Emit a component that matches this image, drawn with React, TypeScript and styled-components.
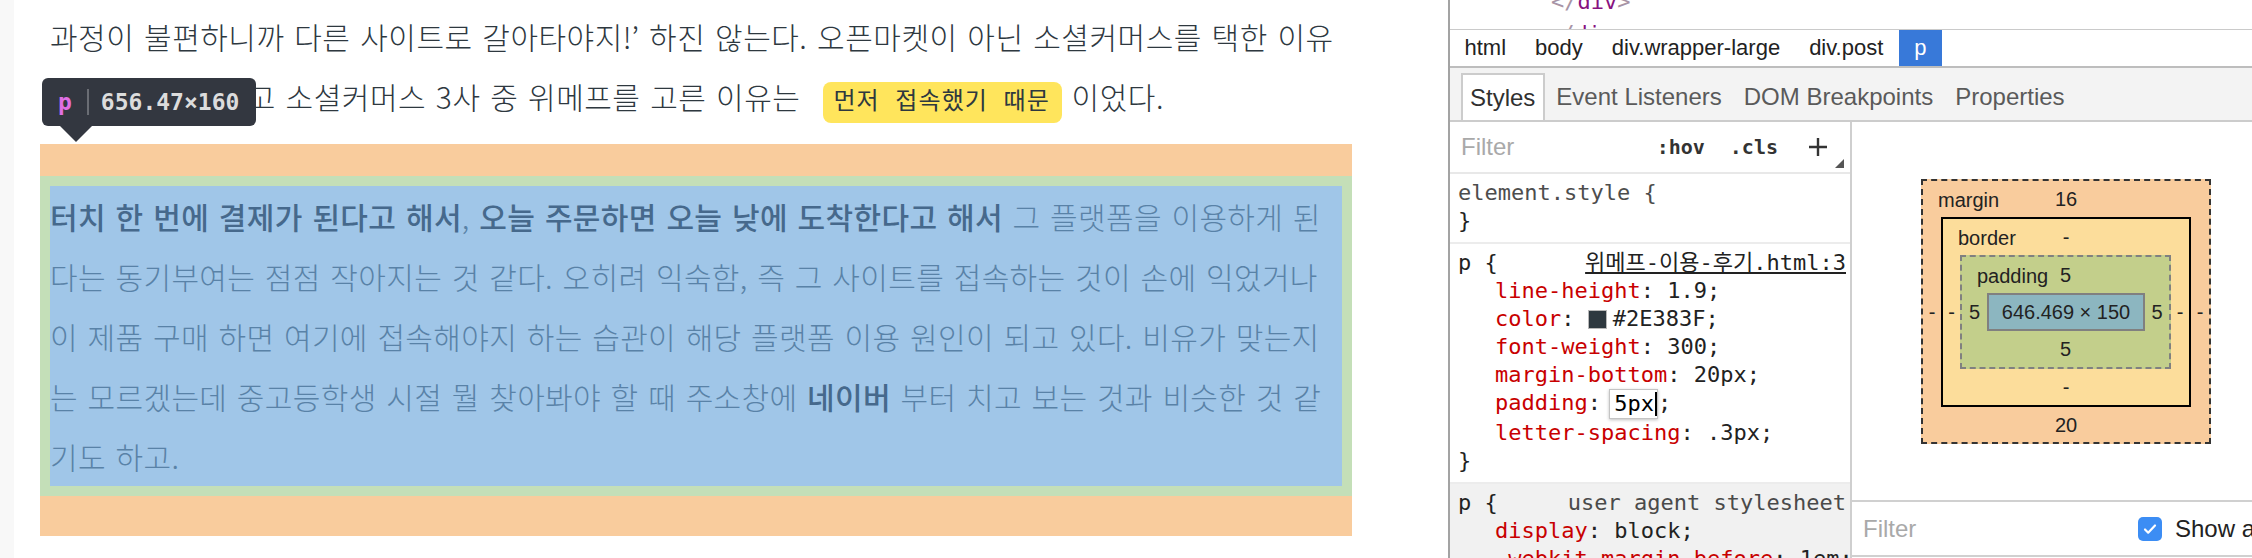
import React from "react";
import styled, { createGlobalStyle, css } from "styled-components";

const GlobalStyle = createGlobalStyle`
  *, *::before, *::after { box-sizing: border-box; }
  html, body { margin: 0; padding: 0; background: #ffffff; }
  body { overflow: hidden; }
`;

const Screen = styled.div`
  display: flex;
  width: 2252px;
  height: 558px;
  overflow: hidden;
  background: #ffffff;
`;

/* ---------------- page side ---------------- */

const Page = styled.main`
  position: relative;
  flex: 0 0 1448px;
  display: flex;
  overflow: hidden;
`;

const Gutter = styled.div`
  flex: 0 0 14px;
  background: #f8f8f8;
`;

const Post = styled.article`
  flex: 0 0 1312px;
  margin-left: 26px;
  display: flex;
  flex-direction: column;
  font-family: "Noto Sans CJK KR", "Noto Sans", sans-serif;
  font-weight: 300;
  font-size: 30px;
  line-height: 60px;
  letter-spacing: 0.5px;
  word-spacing: 2.6px;
  color: #2e383f;
`;

const LeadParagraph = styled.p`
  margin: -4px 0 8px;
  padding: 10px;
`;

const Line = styled.span`
  display: block;
  white-space: nowrap;
`;

const Code = styled.code`
  display: inline-block;
  margin: 0 0 0 23px;
  padding: 0 12px 0 10px;
  border-radius: 8px;
  background: #ffe55c;
  font-family: "Liberation Mono", "Noto Sans CJK KR", monospace;
  font-size: 24px;
  font-weight: 400;
  line-height: 41px;
  letter-spacing: 1.1px;
  word-spacing: 0;
  color: #2e383f;
`;

const MarginBox = styled.div`
  padding: 32px 0 40px;
  background: #f9cc9d;
`;

const PaddingBox = styled.div`
  padding: 10px;
  background: #c4dfb8;
`;

const ContentBox = styled.p`
  margin: 0;
  background: #a0c6e8;
  color: #5982a7;
  letter-spacing: 0.35px;
`;

const Strong = styled.strong`
  font-weight: 500;
  color: #46698c;
`;

const Tooltip = styled.div`
  position: absolute;
  left: 42px;
  top: 78px;
  height: 48px;
  display: flex;
  align-items: center;
  padding: 0 17px 0 16px;
  border-radius: 6px;
  background: #333740;
  font-family: "DejaVu Sans Mono", monospace;
  font-weight: 700;
  font-size: 23px;
  color: #dcdcdc;
  &::after {
    content: "";
    position: absolute;
    left: 18px;
    top: 100%;
    border-left: 16px solid transparent;
    border-right: 16px solid transparent;
    border-top: 16px solid #333740;
  }
`;

const TipTag = styled.span`
  color: #e06fe4;
`;

const TipDivider = styled.span`
  width: 2px;
  height: 26px;
  margin: 0 12px 0 15px;
  background: #6a6d74;
`;

/* ---------------- devtools side ---------------- */

const DevTools = styled.aside`
  flex: 1 1 auto;
  min-width: 0;
  display: flex;
  flex-direction: column;
  border-left: 2px solid #a3a3a3;
  font-family: "Liberation Sans", Arial, sans-serif;
  color: #222222;
`;

const Tree = styled.div`
  flex: 0 0 29px;
  overflow: hidden;
  font-family: "DejaVu Sans Mono", monospace;
  font-size: 22px;
  line-height: 32px;
  white-space: nowrap;
`;

const TreeRow = styled.div<{ $indent: number }>`
  padding-left: ${(p) => p.$indent}px;
  &:first-child {
    margin-top: -14px;
  }
`;

const Bracket = styled.span`
  color: #a894a6;
`;

const TagText = styled.span`
  color: #881280;
`;

const Crumbs = styled.nav`
  flex: 0 0 39px;
  display: flex;
  border-top: 1px solid #cacaca;
  border-bottom: 2px solid #bdbdbd;
  font-size: 22px;
`;

const Crumb = styled.span<{ $selected?: boolean }>`
  display: flex;
  align-items: center;
  padding: 0 14.5px;
  color: #222;
  ${(p) =>
    p.$selected &&
    css`
      margin-left: 1.5px;
      padding: 0 15px;
      background: #3879d9;
      color: #ffffff;
    `}
`;

const TabBar = styled.div`
  flex: 0 0 54px;
  display: flex;
  padding: 5px 0 0 11px;
  background: #f3f3f3;
  border-bottom: 2px solid #cccccc;
  font-size: 24px;
`;

const Tab = styled.span<{ $active?: boolean }>`
  display: flex;
  align-items: center;
  padding: 0 11px;
  color: #5a5a5a;
  ${(p) =>
    p.$active &&
    css`
      padding: 0 8px 0 7px;
      background: #ffffff;
      border: 2px solid #cccccc;
      border-bottom: none;
      color: #303030;
    `}
`;

const Panes = styled.div`
  flex: 1 1 0;
  min-height: 0;
  display: flex;
  overflow: hidden;
`;

const StylesPane = styled.section`
  flex: 0 0 402px;
  display: flex;
  flex-direction: column;
  border-right: 2px solid #cfcfcf;
  overflow: hidden;
`;

const FilterBar = styled.div`
  flex: 0 0 52px;
  display: flex;
  align-items: center;
  padding-left: 11px;
  border-bottom: 2px solid #e8e8e8;
`;

const FilterText = styled.span`
  flex: 1 1 auto;
  font-size: 24px;
  color: #a9a9a9;
`;

const Toggle = styled.span<{ $gap: number }>`
  margin-right: ${(p) => p.$gap}px;
  font-family: "DejaVu Sans Mono", monospace;
  font-weight: 700;
  font-size: 20px;
  color: #333333;
`;

const Corner = styled.svg`
  align-self: flex-end;
  margin: 0 6px 4px 7px;
`;

const Rule = styled.div<{ $ua?: boolean }>`
  flex: 0 0 auto;
  padding: 5px 4px 7px 8px;
  border-bottom: 2px solid #ececec;
  background: ${(p) => (p.$ua ? "#f1f1f1" : "#ffffff")};
  font-family: "DejaVu Sans Mono", "Noto Sans CJK KR", monospace;
  font-size: 22px;
  line-height: 28px;
  white-space: nowrap;
`;

const RuleHead = styled.div`
  display: flex;
  justify-content: space-between;
`;

const Selector = styled.span<{ $muted?: boolean }>`
  color: ${(p) => (p.$muted ? "#4d4d4d" : "#222222")};
`;

const Source = styled.span<{ $link?: boolean }>`
  color: ${(p) => (p.$link ? "#222222" : "#4a4a4a")};
  text-decoration: ${(p) => (p.$link ? "underline" : "none")};
`;

const Decl = styled.div`
  padding-left: 37px;
  color: #222222;
`;

const Prop = styled.span`
  color: #c80000;
`;

const Swatch = styled.span<{ $color: string }>`
  display: inline-block;
  width: 19px;
  height: 19px;
  margin-right: 6px;
  vertical-align: -3px;
  border: 1px solid #b8b8b8;
  background: ${(p) => p.$color};
`;

const Editor = styled.span`
  display: inline-block;
  height: 30px;
  margin-left: -5px;
  padding: 0 0 0 4px;
  line-height: 28px;
  border: 1px solid #c4c4c4;
  background: #ffffff;
  box-shadow: 0 1px 3px rgba(0, 0, 0, 0.25);
  vertical-align: middle;
  color: #000000;
`;

const Caret = styled.span`
  display: inline-block;
  width: 2px;
  height: 24px;
  margin-left: 1px;
  vertical-align: -5px;
  background: #000000;
`;

const ComputedPane = styled.section`
  flex: 1 1 auto;
  min-width: 0;
  display: flex;
  flex-direction: column;
  overflow: hidden;
`;

const BoxModelArea = styled.div`
  flex: 0 0 378px;
  padding: 57px 0 0 69px;
  font-size: 20px;
  color: #222222;
`;

type Layer = "margin" | "border" | "padding";

const layerStyles: Record<Layer, ReturnType<typeof css>> = {
  margin: css`
    grid-template-columns: 18px auto 18px;
    grid-template-rows: 36px auto 35px;
    background: #f9cc9d;
    border: 2px dashed #333333;
  `,
  border: css`
    grid-template-columns: 17px auto 18px;
    grid-template-rows: 36px auto 36px;
    background: #fcdd9b;
    border: 2px solid #000000;
  `,
  padding: css`
    grid-template-columns: 25px auto 24px;
    grid-template-rows: 36px auto 36px;
    background: #c3cf8b;
    border: 2px dashed #808080;
  `,
};

const BoxLayer = styled.div<{ $layer: Layer }>`
  position: relative;
  display: inline-grid;
  align-items: center;
  justify-items: center;
  line-height: 24px;
  ${(p) => layerStyles[p.$layer]}
`;

const LayerLabel = styled.span`
  position: absolute;
  left: 15px;
  top: 7px;
`;

const Edge = styled.span<{ $pos: "top" | "bottom" | "left" | "right" }>`
  ${(p) =>
    p.$pos === "top"
      ? css`grid-column: 1 / -1; grid-row: 1;`
      : p.$pos === "bottom"
      ? css`grid-column: 1 / -1; grid-row: 3;`
      : p.$pos === "left"
      ? css`grid-column: 1; grid-row: 2;`
      : css`grid-column: 3; grid-row: 2;`}
`;

const Inner = styled.div`
  grid-column: 2;
  grid-row: 2;
  display: flex;
`;

const ContentSize = styled.div`
  display: flex;
  align-items: center;
  justify-content: center;
  width: 158px;
  height: 38px;
  background: #8cb6c0;
  border: 2px solid #808080;
`;

const ComputedFilter = styled.div`
  flex: 0 0 57px;
  display: flex;
  align-items: center;
  padding-left: 11px;
  border-top: 2px solid #d0d0d0;
  border-bottom: 2px solid #d0d0d0;
  font-size: 24px;
  white-space: nowrap;
`;

const ComputedFilterText = styled.span`
  flex: 0 0 275px;
  color: #a9a9a9;
`;

const Check = styled.span`
  display: flex;
  align-items: center;
  justify-content: center;
  flex: 0 0 24px;
  height: 24px;
  margin-right: 13px;
  border-radius: 5px;
  background: #3c8df4;
`;

function BoxModel() {
  return (
    <BoxLayer $layer="margin">
      <LayerLabel>margin</LayerLabel>
      <Edge $pos="top">16</Edge>
      <Edge $pos="left">-</Edge>
      <Inner>
        <BoxLayer $layer="border">
          <LayerLabel>border</LayerLabel>
          <Edge $pos="top">-</Edge>
          <Edge $pos="left">-</Edge>
          <Inner>
            <BoxLayer $layer="padding">
              <LayerLabel>padding</LayerLabel>
              <Edge $pos="top">5</Edge>
              <Edge $pos="left">5</Edge>
              <Inner>
                <ContentSize>646.469 × 150</ContentSize>
              </Inner>
              <Edge $pos="right">5</Edge>
              <Edge $pos="bottom">5</Edge>
            </BoxLayer>
          </Inner>
          <Edge $pos="right">-</Edge>
          <Edge $pos="bottom">-</Edge>
        </BoxLayer>
      </Inner>
      <Edge $pos="right">-</Edge>
      <Edge $pos="bottom">20</Edge>
    </BoxLayer>
  );
}

export default function App() {
  return (
    <>
      <GlobalStyle />
      <Screen>
        <Page>
          <Gutter />
          <Post>
            <LeadParagraph>
              <Line>
                과정이 불편하니까 다른 사이트로 갈아타야지!’ 하진 않는다. 오픈마켓이 아닌 소셜커머스를 택한 이유
              </Line>
              <Line>
                는 앞 글에 적었고 소셜커머스 3사 중 위메프를 고른 이유는
                <Code>먼저 접속했기 때문</Code> 이었다.
              </Line>
            </LeadParagraph>
            <MarginBox>
              <PaddingBox>
                <ContentBox>
                  <Line>
                    <Strong>터치 한 번에 결제가 된다고 해서</Strong>, <Strong>오늘 주문하면 오늘 낮에 도착한다고 해서</Strong> 그 플랫폼을 이용하게 된
                  </Line>
                  <Line>다는 동기부여는 점점 작아지는 것 같다. 오히려 익숙함, 즉 그 사이트를 접속하는 것이 손에 익었거나</Line>
                  <Line>이 제품 구매 하면 여기에 접속해야지 하는 습관이 해당 플랫폼 이용 원인이 되고 있다. 비유가 맞는지</Line>
                  <Line>
                    는 모르겠는데 중고등학생 시절 뭘 찾아봐야 할 때 주소창에 <Strong>네이버</Strong> 부터 치고 보는 것과 비슷한 것 같
                  </Line>
                  <Line>기도 하고.</Line>
                </ContentBox>
              </PaddingBox>
            </MarginBox>
          </Post>
          <Tooltip>
            <TipTag>p</TipTag>
            <TipDivider />
            <span>656.47×160</span>
          </Tooltip>
        </Page>

        <DevTools>
          <Tree>
            <TreeRow $indent={101}>
              <Bracket>&lt;/</Bracket>
              <TagText>div</TagText>
              <Bracket>&gt;</Bracket>
            </TreeRow>
            <TreeRow $indent={98}>
              <Bracket>&lt;/</Bracket>
              <TagText>div</TagText>
              <Bracket>&gt;</Bracket>
            </TreeRow>
          </Tree>
          <Crumbs>
            <Crumb>html</Crumb>
            <Crumb>body</Crumb>
            <Crumb>div.wrapper-large</Crumb>
            <Crumb>div.post</Crumb>
            <Crumb $selected>p</Crumb>
          </Crumbs>
          <TabBar>
            <Tab $active>Styles</Tab>
            <Tab>Event Listeners</Tab>
            <Tab>DOM Breakpoints</Tab>
            <Tab>Properties</Tab>
          </TabBar>
          <Panes>
            <StylesPane>
              <FilterBar>
                <FilterText>Filter</FilterText>
                <Toggle $gap={25}>:hov</Toggle>
                <Toggle $gap={30}>.cls</Toggle>
                <svg width="20" height="20" viewBox="0 0 20 20">
                  <path d="M10 1v18M1 10h18" stroke="#333" strokeWidth="2.4" fill="none" />
                </svg>
                <Corner width="9" height="9" viewBox="0 0 9 9">
                  <path d="M9 0v9H0z" fill="#555" />
                </Corner>
              </FilterBar>
              <Rule>
                <RuleHead>
                  <Selector $muted>element.style {"{"}</Selector>
                </RuleHead>
                <div>{"}"}</div>
              </Rule>
              <Rule>
                <RuleHead>
                  <Selector>p {"{"}</Selector>
                  <Source $link>위메프-이용-후기.html:3</Source>
                </RuleHead>
                <Decl>
                  <Prop>line-height</Prop>: 1.9;
                </Decl>
                <Decl>
                  <Prop>color</Prop>: <Swatch $color="#2E383F" />#2E383F;
                </Decl>
                <Decl>
                  <Prop>font-weight</Prop>: 300;
                </Decl>
                <Decl>
                  <Prop>margin-bottom</Prop>: 20px;
                </Decl>
                <Decl>
                  <Prop>padding</Prop>:{" "}
                  <Editor>
                    5px
                    <Caret />
                  </Editor>
                  ;
                </Decl>
                <Decl>
                  <Prop>letter-spacing</Prop>: .3px;
                </Decl>
                <div>{"}"}</div>
              </Rule>
              <Rule $ua>
                <RuleHead>
                  <Selector>p {"{"}</Selector>
                  <Source>user agent stylesheet</Source>
                </RuleHead>
                <Decl>
                  <Prop>display</Prop>: block;
                </Decl>
                <Decl>
                  <Prop>-webkit-margin-before</Prop>: 1em;
                </Decl>
              </Rule>
            </StylesPane>
            <ComputedPane>
              <BoxModelArea>
                <BoxModel />
              </BoxModelArea>
              <ComputedFilter>
                <ComputedFilterText>Filter</ComputedFilterText>
                <Check>
                  <svg width="16" height="16" viewBox="0 0 16 16">
                    <path d="M3 8.5l3.2 3.2L13 4.5" stroke="#fff" strokeWidth="2.2" fill="none" strokeLinecap="round" strokeLinejoin="round" />
                  </svg>
                </Check>
                <span>Show all</span>
              </ComputedFilter>
            </ComputedPane>
          </Panes>
        </DevTools>
      </Screen>
    </>
  );
}
